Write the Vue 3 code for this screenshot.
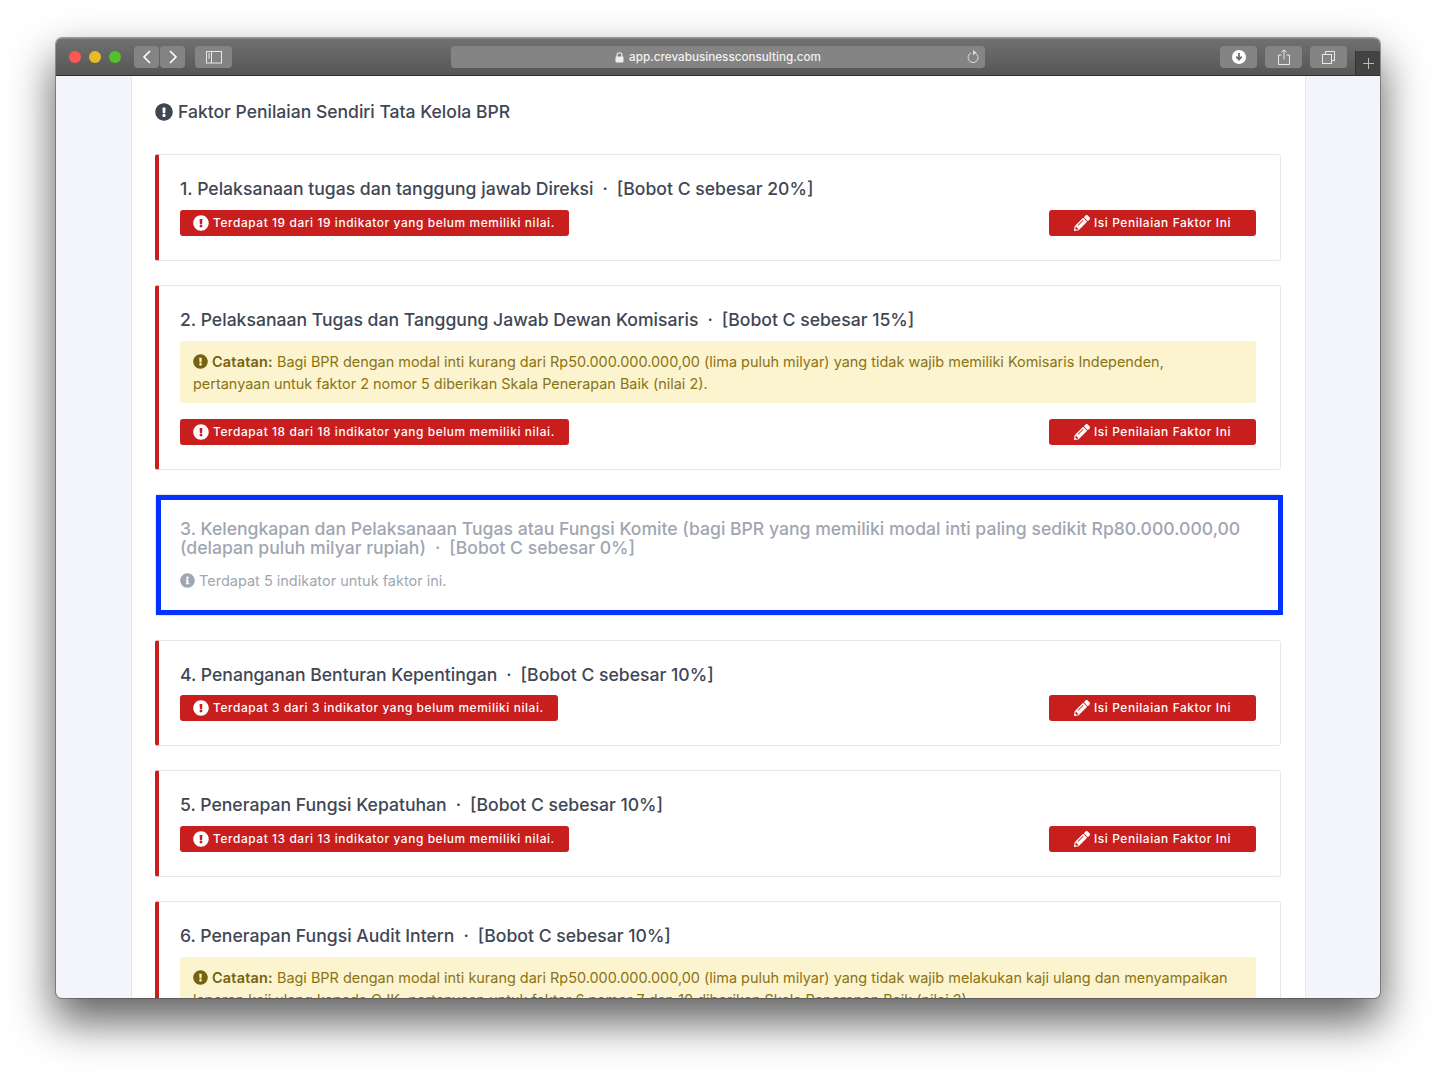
<script setup>
const alertIcon = 'M504 256c0 136.997-111.043 248-248 248S8 392.997 8 256C8 119.083 119.043 8 256 8s248 111.083 248 248zm-248 50c-25.405 0-46 20.595-46 46s20.595 46 46 46 46-20.595 46-46-20.595-46-46-46zm-43.673-165.346l7.418 136c.347 6.364 5.609 11.346 11.982 11.346h48.546c6.373 0 11.635-4.982 11.982-11.346l7.418-136c.375-6.874-5.098-12.654-11.982-12.654h-63.383c-6.884 0-12.356 5.78-11.981 12.654z'
const infoIcon = 'M256 8C119.043 8 8 119.083 8 256c0 136.997 111.043 248 248 248s248-111.003 248-248C504 119.083 392.957 8 256 8zm0 110c23.196 0 42 18.804 42 42s-18.804 42-42 42-42-18.804-42-42 18.804-42 42-42zm56 254c0 6.627-5.373 12-12 12h-88c-6.627 0-12-5.373-12-12v-24c0-6.627 5.373-12 12-12h12v-64h-12c-6.627 0-12-5.373-12-12v-24c0-6.627 5.373-12 12-12h64c6.627 0 12 5.373 12 12v100h12c6.627 0 12 5.373 12 12v24z'
const pencilIcon = 'M497.9 142.1l-46.1 46.1c-4.7 4.7-12.3 4.7-17 0l-111-111c-4.7-4.7-4.7-12.3 0-17l46.1-46.1c18.7-18.7 49.1-18.7 67.9 0l60.1 60.1c18.8 18.7 18.8 49.1 0 67.9zM284.2 99.8L21.6 362.4.4 483.9c-2.9 16.4 11.4 30.6 27.8 27.8l121.5-21.3 262.6-262.6c4.7-4.7 4.7-12.3 0-17l-111-111c-4.8-4.7-12.4-4.7-17.1 0zM124.1 339.9c-5.5-5.5-5.5-14.3 0-19.8l154-154c5.5-5.5 14.3-5.5 19.8 0s5.5 14.3 0 19.8l-154 154c-5.5 5.5-14.3 5.5-19.8 0zM88 424h48v36.3l-64.5 11.3-31.1-31.1L51.7 376H88v48z'

const faktor = [
  { no: 1, nama: 'Pelaksanaan tugas dan tanggung jawab Direksi', bobot: 20, kosong: 19 },
  {
    no: 2,
    nama: 'Pelaksanaan Tugas dan Tanggung Jawab Dewan Komisaris',
    bobot: 15,
    kosong: 18,
    catatan: 'Bagi BPR dengan modal inti kurang dari Rp50.000.000.000,00 (lima puluh milyar) yang tidak wajib memiliki Komisaris Independen, pertanyaan untuk faktor 2 nomor 5 diberikan Skala Penerapan Baik (nilai 2).',
  },
  {
    no: 3,
    nama: 'Kelengkapan dan Pelaksanaan Tugas atau Fungsi Komite (bagi BPR yang memiliki modal inti paling sedikit Rp80.000.000,00 (delapan puluh milyar rupiah)',
    bobot: 0,
    nonaktif: true,
    jumlah: 5,
  },
  { no: 4, nama: 'Penanganan Benturan Kepentingan', bobot: 10, kosong: 3 },
  { no: 5, nama: 'Penerapan Fungsi Kepatuhan', bobot: 10, kosong: 13 },
  {
    no: 6,
    nama: 'Penerapan Fungsi Audit Intern',
    bobot: 10,
    kosong: 12,
    catatan: 'Bagi BPR dengan modal inti kurang dari Rp50.000.000.000,00 (lima puluh milyar) yang tidak wajib melakukan kaji ulang dan menyampaikan laporan kaji ulang kepada OJK, pertanyaan untuk faktor 6 nomor 7 dan 10 diberikan Skala Penerapan Baik (nilai 2).',
  },
]
</script>

<template>
  <div class="page">
    <div class="window">
      <header class="toolbar">
        <div class="dots">
          <span class="dot red"></span>
          <span class="dot yellow"></span>
          <span class="dot green"></span>
        </div>
        <button class="tool nav">
          <svg width="12" height="16" viewBox="0 0 12 16"><path d="M9 2 3 8l6 6" fill="none" stroke="#fff" stroke-width="1.6" /></svg>
        </button>
        <button class="tool nav next">
          <svg width="12" height="16" viewBox="0 0 12 16"><path d="m3 2 6 6-6 6" fill="none" stroke="#fff" stroke-width="1.6" /></svg>
        </button>
        <button class="tool wide side">
          <svg width="16" height="13" viewBox="0 0 16 13" fill="none" stroke="#e8e8e8"><rect x=".5" y=".5" width="15" height="11.5" /><path d="M5.5 .5V12" /><path d="M2 3h2M2 5h2M2 7h2" /></svg>
        </button>
        <div class="address">
          <svg width="9" height="11" viewBox="0 0 9 11"><path d="M2 5V3.2a2.5 2.5 0 0 1 5 0V5" fill="none" stroke="#eee" stroke-width="1.1" /><rect x=".5" y="4.6" width="8" height="6" rx="1" fill="#eee" /></svg>
          <span>app.crevabusinessconsulting.com</span>
          <svg class="reload" width="14" height="16" viewBox="0 0 14 16" fill="none"><path d="M9.6 4.2a5 5 0 1 1-4.6-.2" stroke="#ddd" stroke-width="1" /><path d="M7 1l3.4 2.8L7 6.2z" fill="#ddd" /></svg>
        </div>
        <button class="tool wide download">
          <svg width="14" height="14" viewBox="0 0 14 14"><circle cx="7" cy="7" r="7" fill="#fff" /><path d="M7 3v6M4.3 6.6 7 9.6l2.7-3" fill="none" stroke="#6e6e6e" stroke-width="1.8" /></svg>
        </button>
        <button class="tool wide gap">
          <svg width="12" height="16" viewBox="0 0 12 16" fill="none" stroke="#e8e8e8"><path d="M3.5 6H.5v9.5h11V6h-3" /><path d="M6 10.5V1M3.4 3.4 6 .8l2.6 2.6" /></svg>
        </button>
        <button class="tool wide gap">
          <svg width="13" height="13" viewBox="0 0 13 13" fill="none" stroke="#e8e8e8"><rect x=".5" y="3.5" width="9" height="9" /><path d="M3.5 3.5v-3h9v9h-3" /></svg>
        </button>
        <div class="new-tab">
          <svg width="11" height="11" viewBox="0 0 11 11"><path d="M5.5 0v11M0 5.5h11" stroke="#bbb" stroke-width="1" /></svg>
        </div>
      </header>

      <div class="viewport">
        <main class="column">
          <h1 class="page-title">
            <svg class="icon title-icon" viewBox="0 0 512 512"><path :d="alertIcon" /></svg>
            Faktor Penilaian Sendiri Tata Kelola BPR
          </h1>

          <section class="list">
            <article v-for="f in faktor" :key="f.no" class="card" :class="{ off: f.nonaktif }">
              <h2 class="card-title">
                {{ f.no }}. {{ f.nama }}<span class="dot-sep">·</span>[Bobot C sebesar {{ f.bobot }}%]
              </h2>

              <div v-if="f.catatan" class="note">
                <svg class="icon" viewBox="0 0 512 512"><path :d="alertIcon" /></svg>
                <b>Catatan:</b> {{ f.catatan }}
              </div>

              <p v-if="f.nonaktif" class="info">
                <svg class="icon" viewBox="0 0 512 512"><path :d="infoIcon" /></svg>
                Terdapat {{ f.jumlah }} indikator untuk faktor ini.
              </p>
              <div v-else class="actions">
                <span class="pill">
                  <svg class="icon" viewBox="0 0 512 512"><path :d="alertIcon" /></svg>
                  Terdapat {{ f.kosong }} dari {{ f.kosong }} indikator yang belum memiliki nilai.
                </span>
                <a class="pill btn">
                  <svg class="icon" viewBox="0 0 512 512"><path :d="pencilIcon" /></svg>
                  Isi Penilaian Faktor Ini
                </a>
              </div>

              <div v-if="f.nonaktif" class="marker"></div>
            </article>
          </section>
        </main>
      </div>
    </div>
  </div>
</template>

<style>
html, body { background: #fff; }
</style>

<style scoped>
.page {
  height: 1072px;
  box-sizing: border-box;
  padding: 38px 56px 0;
  overflow: hidden;
}
.window {
  width: 1324px;
  height: 960px;
  border-radius: 6px;
  overflow: hidden;
  display: flex;
  flex-direction: column;
  background: #f4f5fb;
  font-family: Inter, "Noto Sans", sans-serif;
  box-shadow: 0 0 0 1px rgba(70, 70, 70, .5), 0 22px 44px 2px rgba(0, 0, 0, .62);
}

/* barra del navegador */
.toolbar {
  flex: 0 0 38px;
  height: 38px;
  box-sizing: border-box;
  display: flex;
  align-items: flex-start;
  padding: 7px 0 0 13px;
  background: linear-gradient(#707070, #565656);
  border-top: 1px solid #8a8a8a;
  border-bottom: 1px solid #2f2f2f;
}
.dots { display: flex; gap: 8px; margin-top: 5px; margin-right: 13px; }
.dot { width: 12px; height: 12px; border-radius: 50%; }
.red { background: #fc5753; }
.yellow { background: #e6bb26; }
.green { background: #51c22e; }

.tool {
  height: 22px;
  border: 0;
  padding: 0;
  border-radius: 4px;
  background: #848484;
  display: flex;
  align-items: center;
  justify-content: center;
}
.nav { width: 25px; }
.next { margin-left: 1px; }
.wide { width: 37px; }
.side { margin-left: 10px; }
.download { margin-left: 235px; }
.gap { margin-left: 8px; }

.address {
  width: 534px;
  height: 22px;
  margin-left: 219px;
  border-radius: 4px;
  background: #848484;
  color: #f2f2f2;
  font-size: 11.7px;
  font-weight: 500;
  display: flex;
  align-items: center;
  justify-content: center;
  gap: 5px;
  position: relative;
}
.reload { position: absolute; right: 5px; top: 3px; }

.new-tab {
  width: 25px;
  height: 24px;
  margin: 5px 0 0 8px;
  background: #434343;
  display: flex;
  align-items: center;
  justify-content: center;
  border-left: 1px solid #333;
  box-sizing: border-box;
}

/* contenido */
.viewport {
  flex: 1;
  min-height: 0;
  overflow: hidden;
}
.column {
  width: 1175px;
  margin-left: 75px;
  box-sizing: border-box;
  padding: 0 23px;
  background: #fff;
  border-left: 1px solid #e2e8f0;
  border-right: 1px solid #e2e8f0;
}
.icon { fill: currentColor; flex-shrink: 0; }

.page-title {
  margin: 0;
  padding-top: 25px;
  height: 78.25px;
  box-sizing: border-box;
  font-size: 17.55px;
  line-height: 22px;
  font-weight: 500;
  color: #3f4754;
  display: flex;
  align-items: flex-start;
  gap: 5px;
}
.title-icon { width: 18px; height: 18px; margin-top: 2px; }

.list { display: flex; flex-direction: column; gap: 24px; padding-right: 1px; }

.card {
  position: relative;
  box-sizing: border-box;
  padding: 24px 24px 24px 21px;
  background: #fff;
  border: 1px solid #e5e7eb;
  border-left: 4px solid #c81e1e;
  border-radius: 3px;
}
.card.off { border-left: 1px solid #e5e7eb; padding-left: 24px; }

.card-title {
  margin: 0 0 11.75px;
  font-size: 17.6px;
  line-height: 19px;
  font-weight: 500;
  color: #3f4754;
}
.dot-sep { margin: 0 9px; }
.off .card-title { color: #9fa6b2; }

.note {
  margin-bottom: 16px;
  padding: 10px 24px 8px 13px;
  border-radius: 3px;
  background: #fcf3cf;
  color: #8a7414;
  font-size: 14.45px;
  line-height: 22px;
}
.note b { font-weight: 600; color: #76620f; letter-spacing: .2px; }
.note .icon { width: 15px; height: 15px; vertical-align: -2px; color: #76620f; margin-right: 4px; }

.info {
  margin: 0;
  padding-top: 1px;
  font-size: 14.5px;
  line-height: 21px;
  color: #9fa6b2;
  display: flex;
  align-items: center;
  gap: 4px;
}
.info .icon { width: 15px; height: 15px; }

.actions { display: flex; justify-content: space-between; align-items: center; }

.pill {
  height: 26px;
  box-sizing: border-box;
  padding: 0 14px 1px 13px;
  display: inline-flex;
  align-items: center;
  gap: 4px;
  border-radius: 3px;
  background: #c81e1e;
  color: #fff;
  font-size: 11.9px;
  font-weight: 500;
  letter-spacing: .05em;
}
.pill .icon { width: 16px; height: 16px; margin-top: 1px; }
.btn { padding: 0 25px 1px; }

/* recuadro azul de anotación sobre la tarjeta */
.marker {
  position: absolute;
  left: 0;
  top: 0;
  right: -3px;
  bottom: 0;
  border: 5px solid #0433ff;
  pointer-events: none;
}
</style>
